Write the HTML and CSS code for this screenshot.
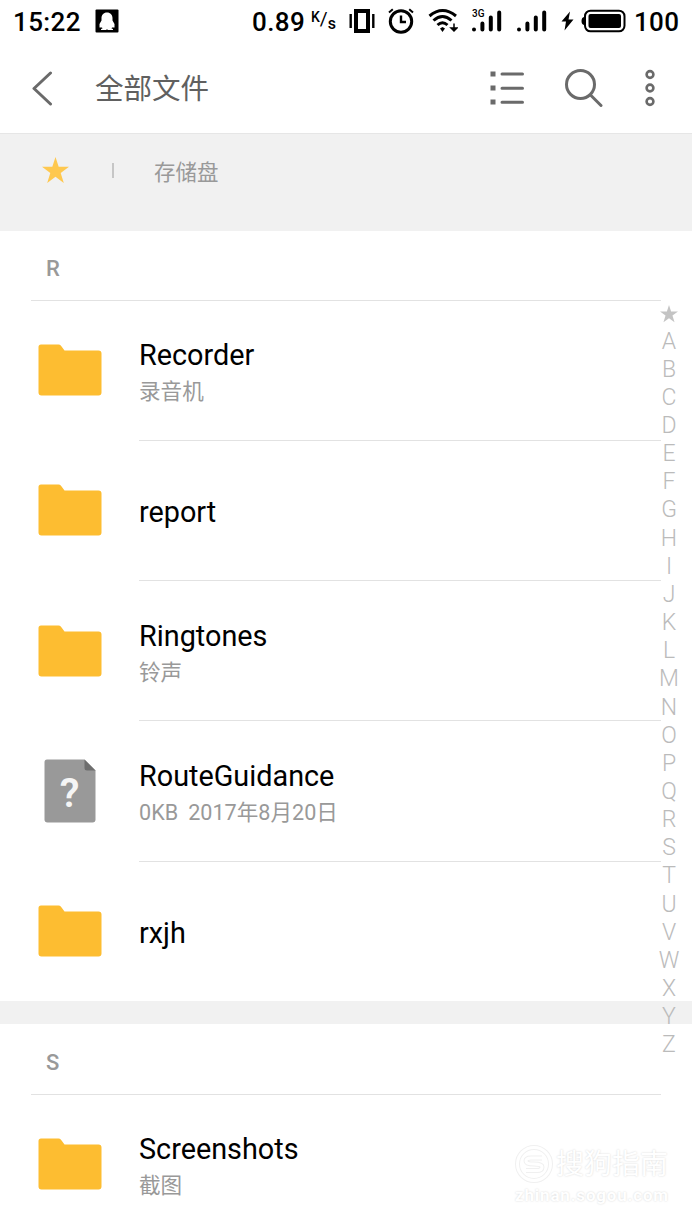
FILE: index.html
```html
<!DOCTYPE html>
<html lang="zh-CN">
<head>
  <meta charset="UTF-8" />
  <meta name="viewport" content="width=device-width, initial-scale=1" />
  <title>全部文件</title>
  <link rel="stylesheet" href="styles.css">
</head>
<body>

  <!-- shared icons -->
  <svg class="defs" width="0" height="0">
    <symbol id="folder" viewBox="0 0 64 52">
      <path d="M3 0.5H20.5Q22 0.5 23 1.7L26.5 6.5H60.5Q63.5 6.5 63.5 9.5V48.5Q63.5 51.5 60.5 51.5H3.5Q0.5 51.5 0.5 48.5V3Q0.5 0.5 3 0.5Z" fill="#fdbd31"/>
    </symbol>
    <symbol id="star" viewBox="0 0 28 28">
      <path d="M14 0L17.3 10.2H28L19.4 16.5L22.6 27L14 20.6L5.4 27L8.6 16.5L0 10.2H10.7Z" fill="currentColor"/>
    </symbol>
  </svg>

  <div class="status-bar">
    <span class="time">15:22</span>
    <svg class="qq" width="24" height="24" viewBox="0 0 24 24">
      <rect x="0.5" y="0.5" width="23" height="23" rx="1" fill="#000"/>
      <path d="M12 3.5C8.5 3.5 6.5 6 6.5 9V11.5L4.5 15V18.5H7L7.5 19.5L6 20V21H11L12 20.2L13 21H18V20L16.5 19.5L17 18.5H19.5V15L17.5 11.5V9C17.5 6 15.5 3.5 12 3.5Z" fill="#fff"/>
    </svg>

    <div class="status-right">
      <span class="speed">0.89</span>
      <span class="unit"><span class="unit-k">K</span><span class="unit-slash">/</span><span class="unit-s">s</span></span>
      <svg class="vibrate" width="26" height="26" viewBox="0 0 26 26">
        <path d="M1.7 6V20M24.3 6V20" stroke="#000" stroke-width="2.4"/>
        <rect x="7" y="3" width="12" height="20" fill="none" stroke="#000" stroke-width="4"/>
      </svg>
      <svg class="alarm" width="26" height="26" viewBox="0 0 26 26">
        <circle cx="13" cy="13.5" r="10.7" fill="none" stroke="#000" stroke-width="3"/>
        <path d="M13 7.5V14H18" fill="none" stroke="#000" stroke-width="2.4"/>
        <path d="M1 4.5L4.8 1.2M25 4.5L21.2 1.2" stroke="#000" stroke-width="2"/>
      </svg>
      <svg class="wifi" width="30" height="26" viewBox="0 0 30 26">
        <path d="M1.5 8Q14.5 -3 28 8M5.5 12.5Q14.5 4.5 23.5 12.5M9.5 17Q14.5 12.5 19.5 17" fill="none" stroke="#000" stroke-width="3"/>
        <path d="M12 20.5L14.5 19L17 20.5L14.5 24Z" fill="#000"/>
        <path d="M26 15.5V21M23 20L26 23L29 20Z" fill="#000" stroke="#000" stroke-width="1.5"/>
      </svg>
      <div class="signal signal-3g">
        <span class="net">3G</span>
        <svg width="30" height="24" viewBox="0 0 30 24">
          <path d="M2 20.5V20.6M10.4 20.5V14.5M18.8 20.5V8.5M27.2 20.5V3.5" stroke="#000" stroke-width="4" stroke-linecap="round"/>
        </svg>
      </div>
      <div class="signal">
        <svg width="30" height="24" viewBox="0 0 30 24">
          <path d="M2 20.5V20.6M10.4 20.5V14.5M18.8 20.5V8.5M27.2 20.5V3.5" stroke="#000" stroke-width="4" stroke-linecap="round"/>
        </svg>
      </div>
      <svg class="bolt" width="13" height="20" viewBox="0 0 13 20">
        <path d="M9 0.5L0.5 10.5H5L3.5 19.5L12.5 8.5H7.5Z" fill="#000"/>
      </svg>
      <svg class="battery" width="45" height="24" viewBox="0 0 45 24">
        <path d="M3 8Q0.5 8.5 0.5 12Q0.5 15.5 3 16Z" fill="#000"/>
        <rect x="4" y="1.7" width="39.5" height="20.6" rx="5.5" fill="none" stroke="#000" stroke-width="2"/>
        <rect x="7.5" y="5" width="32.5" height="14" rx="2" fill="#000"/>
      </svg>
      <span class="percent">100</span>
    </div>
  </div>

  <div class="header">
    <svg class="back" width="22" height="36" viewBox="0 0 22 36">
      <path d="M19.5 3L3 18.5L19.5 34" fill="none" stroke="#6a6a6a" stroke-width="3" stroke-linecap="round" stroke-linejoin="round"/>
    </svg>
    <h1>全部文件</h1>
    <svg class="list-icon" width="34" height="34" viewBox="0 0 34 34">
      <path d="M0.5 0.5h5v5h-5zM0.5 14.5h5v5h-5zM0.5 28.5h5v5h-5z" fill="#6a6a6a"/>
      <path d="M12 3H32.5M12 17.3H32.5M12 31.2H32.5" stroke="#6a6a6a" stroke-width="3" stroke-linecap="round"/>
    </svg>
    <svg class="search-icon" width="38" height="38" viewBox="0 0 38 38">
      <circle cx="15.5" cy="15.5" r="14" fill="none" stroke="#6a6a6a" stroke-width="3"/>
      <path d="M25.5 26L36 36.5" stroke="#6a6a6a" stroke-width="3" stroke-linecap="round"/>
    </svg>
    <svg class="more-icon" width="10" height="38" viewBox="0 0 10 38">
      <g fill="none" stroke="#6a6a6a" stroke-width="2.6">
        <circle cx="5" cy="5.5" r="3.4"/>
        <circle cx="5" cy="19" r="3.4"/>
        <circle cx="5" cy="32.5" r="3.4"/>
      </g>
    </svg>
  </div>

  <div class="crumbs">
    <svg class="fav"><use href="#star"/></svg>
    <span class="sep"></span>
    <span class="crumb">存储盘</span>
  </div>

  <div class="section">
    <div class="section-title">R</div>
    <div class="row">
      <div class="icon"><svg class="folder"><use href="#folder"/></svg></div>
      <div class="info">
        <div class="name">Recorder</div>
        <div class="desc">录音机</div>
      </div>
    </div>
    <div class="row">
      <div class="icon"><svg class="folder"><use href="#folder"/></svg></div>
      <div class="info">
        <div class="name">report</div>
      </div>
    </div>
    <div class="row">
      <div class="icon"><svg class="folder"><use href="#folder"/></svg></div>
      <div class="info">
        <div class="name">Ringtones</div>
        <div class="desc">铃声</div>
      </div>
    </div>
    <div class="row">
      <div class="icon">
        <div class="file">
          <svg width="52" height="64" viewBox="0 0 52 64">
            <path d="M3 0.5H40.5L51.5 11.5V60.5Q51.5 63.5 48.5 63.5H3.5Q0.5 63.5 0.5 60.5V3Q0.5 0.5 3 0.5Z" fill="#999"/>
            <path d="M40.5 0.5L51.5 11.5H43Q40.5 11.5 40.5 9Z" fill="#6e6e6e"/>
          </svg>
          <span class="mark">?</span>
        </div>
      </div>
      <div class="info">
        <div class="name">RouteGuidance</div>
        <div class="desc"><span>0KB</span><span>2017年8月20日</span></div>
      </div>
    </div>
    <div class="row last">
      <div class="icon"><svg class="folder"><use href="#folder"/></svg></div>
      <div class="info">
        <div class="name">rxjh</div>
      </div>
    </div>
  </div>

  <div class="section next">
    <div class="section-title">S</div>
    <div class="row last">
      <div class="icon"><svg class="folder"><use href="#folder"/></svg></div>
      <div class="info">
        <div class="name">Screenshots</div>
        <div class="desc">截图</div>
      </div>
    </div>
  </div>

  <div class="index">
    <svg class="index-star"><use href="#star"/></svg>
    <span>A</span><span>B</span><span>C</span><span>D</span><span>E</span><span>F</span><span>G</span>
    <span>H</span><span>I</span><span>J</span><span>K</span><span>L</span><span>M</span><span>N</span>
    <span>O</span><span>P</span><span>Q</span><span>R</span><span>S</span><span>T</span><span>U</span>
    <span>V</span><span>W</span><span>X</span><span>Y</span><span>Z</span>
  </div>

  <div class="watermark">
    <div class="brand">
      <svg width="38" height="38" viewBox="0 0 38 38">
        <circle cx="19" cy="19" r="16.5" fill="none" stroke="#f0f0f0" stroke-width="5"/>
        <circle cx="19" cy="19" r="16.5" fill="none" stroke="#fff" stroke-width="3"/>
        <path d="M27 13H16Q11 13 11 16Q11 19 19 19Q27 19 27 22Q27 25.5 22 25.5H11" fill="none" stroke="#f0f0f0" stroke-width="5"/>
        <path d="M27 13H16Q11 13 11 16Q11 19 19 19Q27 19 27 22Q27 25.5 22 25.5H11" fill="none" stroke="#fff" stroke-width="3"/>
      </svg>
      <span>搜狗指南</span>
    </div>
    <div class="site">zhinan.sogou.com</div>
  </div>

</body>
</html>
```
FILE: styles.css
```css
* {
  box-sizing: border-box;
}
body {
  position: relative;
  margin: 0;
  height: 1230px;
  overflow: hidden;
  background: #fff;
  color: #000;
  font-family: Roboto, "Noto Sans CJK SC", sans-serif;
}
svg {
  display: block;
  flex: none;
}
.defs {
  position: absolute;
}

/* status bar */
.status-bar {
  display: flex;
  align-items: center;
  height: 43px;
  padding: 0 12px 0 13px;
  font-size: 26px;
  font-weight: 500;
  line-height: 44px;
}
.time {
  width: 82px;
  padding-top: 1px;
  letter-spacing: 0.4px;
}
.qq {
  margin-top: -2px;
}
.status-right {
  display: flex;
  align-items: center;
  margin-left: auto;
}
.status-right > svg,
.signal {
  margin-top: -2px;
}
.speed {
  width: 59px;
  padding-top: 1px;
  letter-spacing: 0.4px;
}
.unit {
  display: flex;
  width: 38px;
  font-size: 14px;
  line-height: 20px;
}
.unit-k {
  padding-bottom: 10px;
}
.unit-slash {
  padding-top: 2px;
  font-size: 19px;
  font-weight: 400;
}
.unit-s {
  padding-top: 7px;
  font-size: 16px;
}
.alarm {
  margin-left: 13px;
}
.wifi {
  margin-left: 14px;
}
.signal {
  position: relative;
  margin-left: 15px;
}
.signal-3g {
  margin-left: 14px;
}
.net {
  position: absolute;
  left: 0;
  top: 0;
  font-size: 10px;
  line-height: 10px;
}
.bolt {
  margin-left: 14px;
}
.battery {
  margin-left: 7px;
}
.percent {
  width: 46px;
  margin-left: 8px;
  padding-top: 1px;
  letter-spacing: 0.3px;
}

/* title bar */
.header {
  display: flex;
  align-items: center;
  height: 91px;
  padding: 0 37px 0 31px;
  border-bottom: 1px solid #e6e6e6;
}
.header h1 {
  flex: 1;
  margin: 0 0 0 42px;
  padding-top: 4px;
  color: #606060;
  font-size: 28.5px;
  font-weight: 400;
  line-height: 40px;
}
.search-icon {
  margin-left: 41px;
}
.more-icon {
  margin-left: 42px;
}

.crumbs {
  display: flex;
  align-items: center;
  height: 97px;
  padding: 0 42px 24px;
  background: #f1f1f1;
  color: #999;
}
.fav {
  width: 27px;
  height: 27px;
  color: #fec84f;
}
.sep {
  width: 2px;
  height: 15px;
  margin: 0 40px 0 43px;
  background: #c6c6c6;
}
.crumb {
  font-size: 21.5px;
}

/* file list */
.section-title {
  height: 69.5px;
  margin: 0 31px;
  padding-left: 15px;
  border-bottom: 1px solid #e2e2e2;
  color: #999;
  font-size: 22px;
  font-weight: 500;
  line-height: 75px;
}
.next {
  border-top: 23px solid #f1f1f1;
}
.next .section-title {
  height: 71px;
  line-height: 77px;
}
.row {
  display: flex;
  height: 140.25px;
  margin-right: 31px;
}
.section > .last {
  height: 139.25px;
}
.icon {
  display: flex;
  align-items: center;
  justify-content: center;
  width: 139px;
  padding-bottom: 1px;
}
.folder {
  width: 64px;
  height: 52px;
}
.file {
  position: relative;
}
.mark {
  position: absolute;
  left: 0;
  top: 12px;
  width: 52px;
  color: #f5f5f5;
  font-size: 40px;
  font-weight: 600;
  line-height: 46px;
  text-align: center;
}
.info {
  display: flex;
  flex: 1;
  flex-direction: column;
  justify-content: center;
  padding-top: 7px;
  border-bottom: 1px solid #e2e2e2;
}
.last .info {
  border-bottom: none;
}
.name {
  font-size: 28.8px;
  line-height: 36px;
}
.name:only-child {
  margin-bottom: 3px;
}
.desc {
  display: flex;
  gap: 10px;
  color: #999;
  font-size: 21.6px;
  line-height: 37px;
}

/* letter index on the right edge */
.index {
  position: absolute;
  top: 300px;
  right: 8px;
  display: flex;
  flex-direction: column;
  align-items: center;
  width: 30px;
  color: #bbb;
  font-size: 23px;
  font-weight: 300;
  line-height: 28.16px;
}
.index span {
  height: 28.16px;
}
.index-star {
  width: 18px;
  height: 18px;
  margin: 5px 0 4.5px;
  color: #c4c4c4;
}

/* watermark */
.watermark {
  position: absolute;
  left: 515px;
  top: 1143px;
  color: #fff;
  text-shadow: 0 0 2px #d4d4d4;
}
.brand {
  display: flex;
  align-items: center;
  gap: 3px;
  font-size: 28px;
  line-height: 38px;
}
.brand span {
  padding-top: 3px;
}
.site {
  margin-top: -2px;
  font-size: 17px;
  font-weight: 700;
  letter-spacing: 0.8px;
  line-height: 26px;
}
```
